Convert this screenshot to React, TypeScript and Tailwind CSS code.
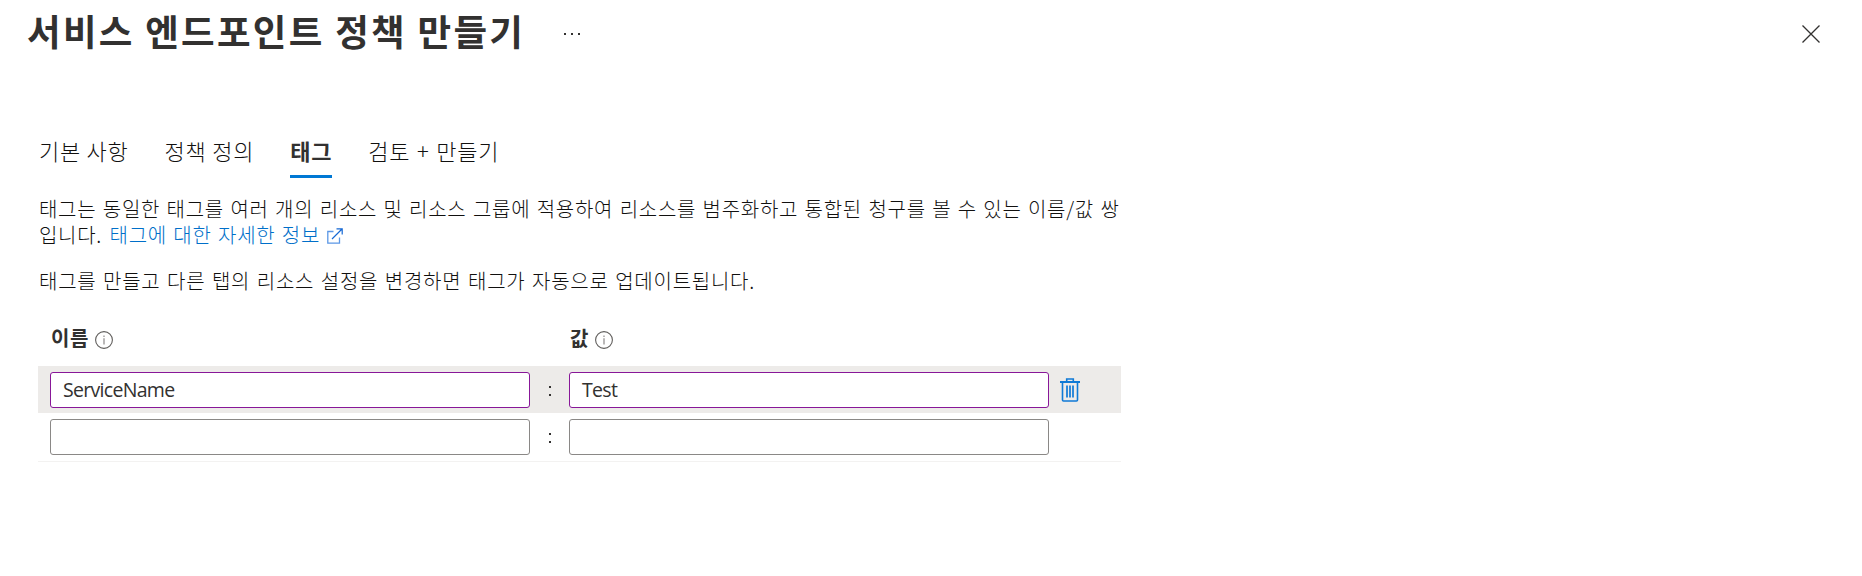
import type { ReactNode } from 'react';

const tabs = [
  { label: '기본 사항', style: '' },
  { label: '정책 정의', style: '' },
  { label: '태그', style: 'border-b-[3px] border-[#0078d4] font-bold text-[#323130]' },
  { label: '검토 + 만들기', style: '[word-spacing:1.2px]' },
];

const rows = [
  { name: 'ServiceName', value: 'Test', filled: true },
  { name: '', value: '', filled: false },
];

function InfoIcon() {
  return (
    <svg width="18" height="18" viewBox="0 0 18 18" fill="none" className="mt-[3px] shrink-0">
      <circle cx="9" cy="9" r="8.4" stroke="#605e5c" strokeWidth="1.1" />
      <path d="M9 7.2V13.4" stroke="#a3a1a0" strokeWidth="1.5" />
      <path d="M9 4.6V6" stroke="#a3a1a0" strokeWidth="1.5" />
    </svg>
  );
}

function ExternalIcon() {
  return (
    <svg width="16" height="16" viewBox="0 0 16 16" fill="none" className="ml-[7px] inline-block align-[-1px]">
      <path d="M6.5 3.5H.8V15.2H12.5V9.5" stroke="#5b97e6" strokeWidth="1.3" />
      <path d="M5 11L15 1M9.5.8H15.2V6.5" stroke="#1668d4" strokeWidth="1.2" />
    </svg>
  );
}

function TrashIcon() {
  return (
    <svg width="20" height="24" viewBox="0 0 20 24" fill="none" stroke="#0f7ad6">
      <path d="M0 4H20" strokeWidth="2" />
      <path d="M6.7 3.5V1H13.3V3.5" strokeWidth="1.6" />
      <path d="M2.5 4V22Q2.5 23 3.5 23H16.5Q17.5 23 17.5 22V4" strokeWidth="1.6" />
      <path d="M7 7.5V19.5M10 7.5V19.5M13 7.5V19.5" strokeWidth="1.7" />
    </svg>
  );
}

function Field({ value, filled }: { value: string; filled: boolean }) {
  return (
    <div
      className={`flex h-9 w-[480px] items-center rounded-[3px] border bg-white pl-3 font-['Open_Sans','Noto_Sans_CJK_KR',sans-serif] text-[19.5px] font-normal tracking-[-0.7px] text-[#323130] ${
        filled ? 'border-[#881798]' : 'border-[#8a8886]'
      }`}
    >
      {value}
    </div>
  );
}

function Heading({ children }: { children: ReactNode }) {
  return (
    <div className="flex w-[519px] items-center gap-[6px] text-[20px] leading-[28px] font-bold tracking-[0.6px] text-[#323130]">
      <span>{children}</span>
      <InfoIcon />
    </div>
  );
}

export default function App() {
  return (
    <main className="h-[576px] w-[1862px] overflow-hidden bg-white font-['Noto_Sans_CJK_KR',sans-serif] font-light text-[#11100f]">
      <header className="flex h-[64px] items-start justify-between pr-[42px] pl-[27px]">
        <div className="flex">
          <h1 className="text-[36.5px] leading-[62px] font-bold tracking-[2.3px] whitespace-nowrap text-[#323130]">
            서비스 엔드포인트 정책 만들기
          </h1>
          <div className="mt-[33px] ml-[39px] flex gap-[5px]">
            <span className="size-[2px] bg-[#323130]" />
            <span className="size-[2px] bg-[#323130]" />
            <span className="size-[2px] bg-[#323130]" />
          </div>
        </div>
        <svg width="18" height="18" viewBox="0 0 18 18" className="mt-[25px]" stroke="#323130" strokeWidth="1.3">
          <path d="M.5 .5L17.5 17.5M17.5 .5L.5 17.5" />
        </svg>
      </header>

      <nav className="mt-[70px] flex gap-[36px] pl-[39px] text-[22px] leading-[32px] tracking-[0.75px] whitespace-nowrap">
        {tabs.map((tab) => (
          <div key={tab.label} className={`h-[44px] ${tab.style}`}>
            {tab.label}
          </div>
        ))}
      </nav>

      <section className="pl-[38px]">
        <p className="mt-[18px] pl-px text-[20px] leading-[26px] tracking-[0.72px] [word-spacing:1.3px] whitespace-nowrap">
          태그는 동일한 태그를 여러 개의 리소스 및 리소스 그룹에 적용하여 리소스를 범주화하고 통합된 청구를 볼 수 있는 이름/값 쌍
          <br />
          입니다.{' '}
          <a className="ml-px text-[#006fc9]">
            태그에 대한 자세한 정보
            <ExternalIcon />
          </a>
        </p>
        <p className="mt-[20px] pl-px text-[20px] leading-[26px] tracking-[0.75px] [word-spacing:1.4px] whitespace-nowrap">
          태그를 만들고 다른 탭의 리소스 설정을 변경하면 태그가 자동으로 업데이트됩니다.
        </p>

        <div className="mt-[30px] flex pl-[13px]">
          <Heading>이름</Heading>
          <Heading>값</Heading>
        </div>

        <div className="mt-[14px] w-[1083px]">
          {rows.map((row, i) => (
            <div
              key={i}
              className={`flex items-start pt-[6px] pl-3 ${
                row.filled ? 'h-[47px] bg-[#edebe9]' : 'h-[49px] border-b border-[#f3f2f1]'
              }`}
            >
              <Field value={row.name} filled={row.filled} />
              <div className="flex h-9 w-[39px] flex-col items-center justify-center gap-[6px] pl-px pt-[2px]">
                <span className="size-[2px] bg-[#323130]" />
                <span className="size-[2px] bg-[#323130]" />
              </div>
              <Field value={row.value} filled={row.filled} />
              {row.filled && (
                <div className="mt-[6px] ml-[11px]">
                  <TrashIcon />
                </div>
              )}
            </div>
          ))}
        </div>
      </section>
    </main>
  );
}
